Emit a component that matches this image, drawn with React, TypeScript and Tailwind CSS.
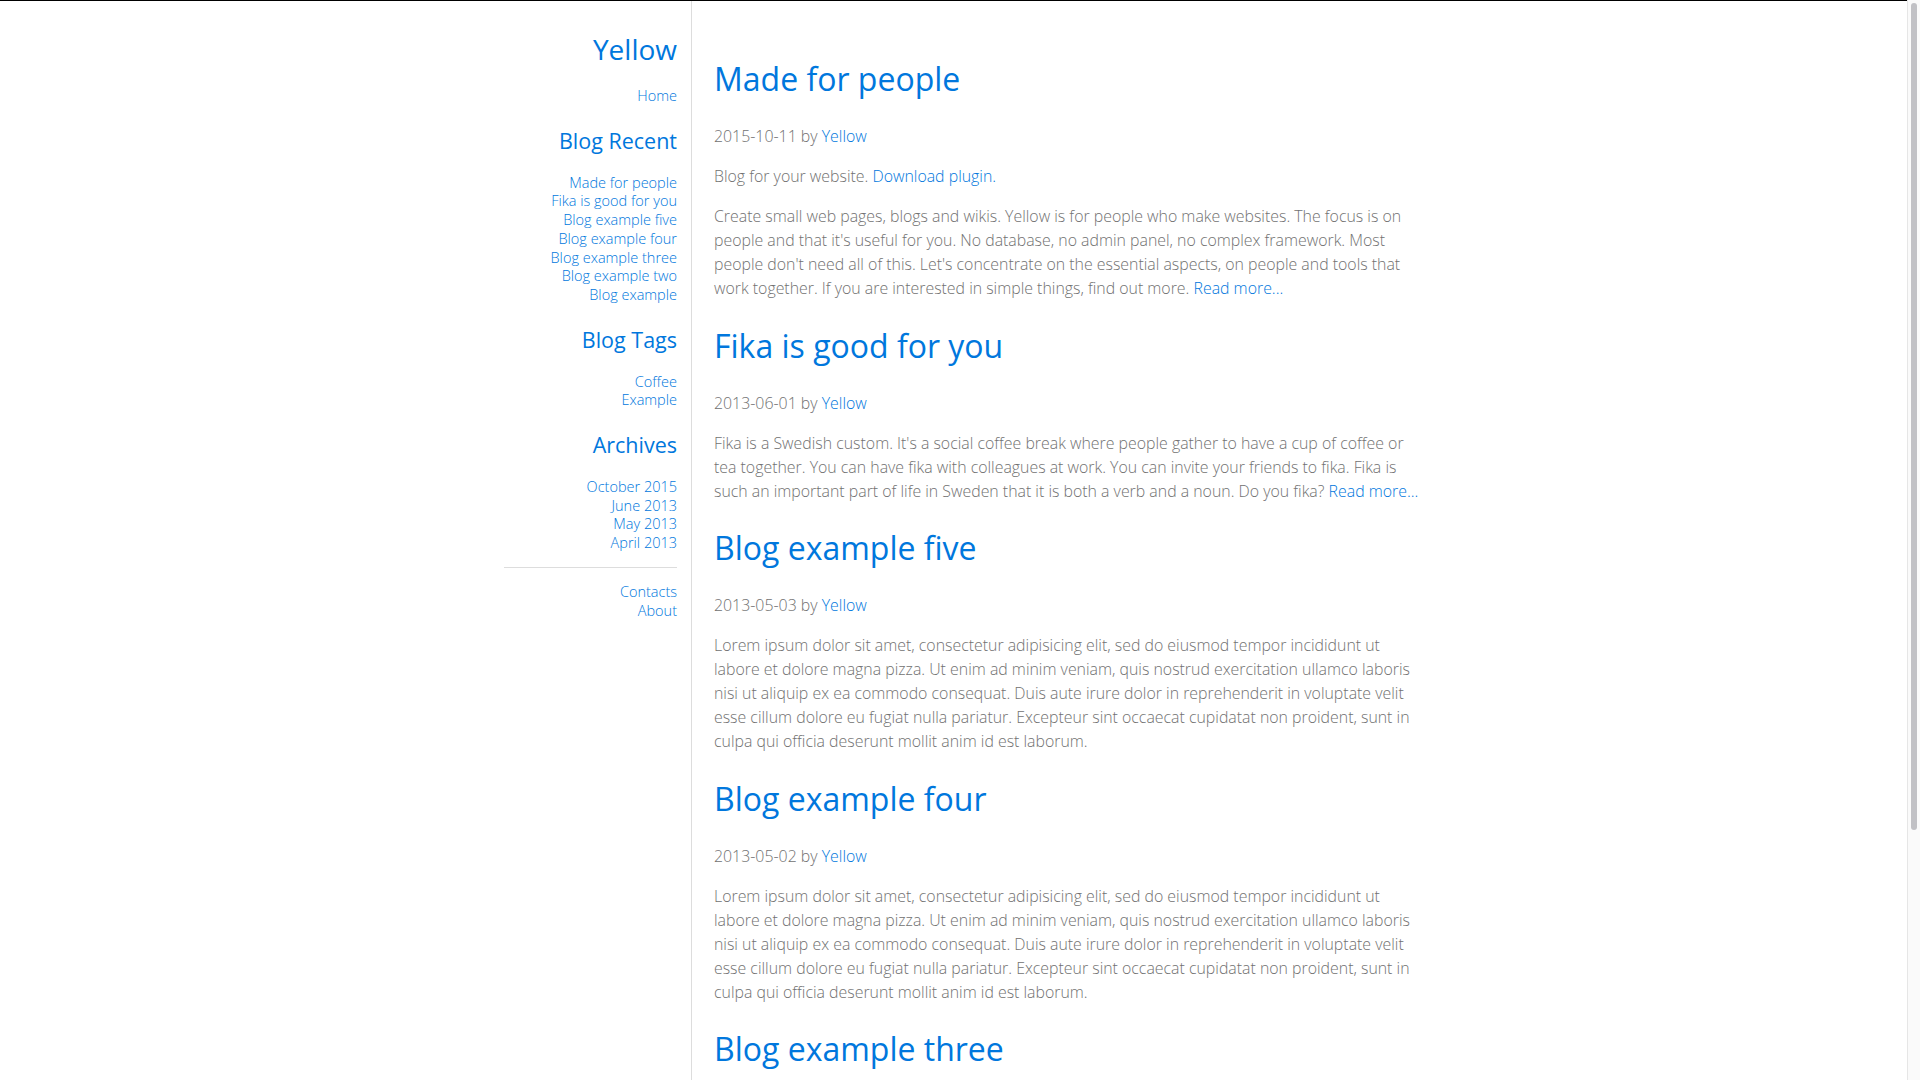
import React from "react";

const LOREM =
  "Lorem ipsum dolor sit amet, consectetur adipisicing elit, sed do eiusmod tempor incididunt ut labore et dolore magna pizza. Ut enim ad minim veniam, quis nostrud exercitation ullamco laboris nisi ut aliquip ex ea commodo consequat. Duis aute irure dolor in reprehenderit in voluptate velit esse cillum dolore eu fugiat nulla pariatur. Excepteur sint occaecat cupidatat non proident, sunt in culpa qui officia deserunt mollit anim id est laborum.";

function SideHeading({ children }: { children: React.ReactNode }) {
  return (
    <h2 className="mt-[22px] mb-[20px] text-[21.5px] leading-[26px] font-normal text-[#0077dd]">
      {children}
    </h2>
  );
}

function SideList({ items }: { items: string[] }) {
  return (
    <ul className="text-[14.5px] leading-[18.7px]">
      {items.map((t) => (
        <li key={t}>
          <a className="text-[#0077dd]" href="#">
            {t}
          </a>
        </li>
      ))}
    </ul>
  );
}

function Meta({ date }: { date: string }) {
  return (
    <p className="my-4">
      {date} by <a className="text-[#0077dd]" href="#">Yellow</a>
    </p>
  );
}

function Title({ children }: { children: React.ReactNode }) {
  return (
    <h1 className="mt-[26.4px] mb-[25.8px] text-[32px] leading-[38.4px] font-normal text-[#0077dd]">
      {children}
    </h1>
  );
}

export default function App() {
  return (
    <div
      className="flex h-screen w-full overflow-hidden bg-white text-[#717171] font-light"
      style={{ fontFamily: '"Open Sans", "Liberation Sans", sans-serif' }}
    >
      <div className="flex-1 min-w-0 border-t border-black">
        <div className="flex pl-[504px]">
          <aside className="w-[188px] shrink-0 border-r border-[#dddddd] pr-[14px] pt-[31px] text-right min-h-[1079px]">
            <div className="text-[28px] leading-[34px] font-normal text-[#0077dd]">Yellow</div>
            <div className="mt-[21px] text-[14.5px] leading-[18.7px]">
              <a className="text-[#0077dd]" href="#">Home</a>
            </div>
            <SideHeading>Blog Recent</SideHeading>
            <SideList
              items={[
                "Made for people",
                "Fika is good for you",
                "Blog example five",
                "Blog example four",
                "Blog example three",
                "Blog example two",
                "Blog example",
              ]}
            />
            <SideHeading>Blog Tags</SideHeading>
            <SideList items={["Coffee", "Example"]} />
            <SideHeading>Archives</SideHeading>
            <SideList items={["October 2015", "June 2013", "May 2013", "April 2013"]} />
            <hr className="mt-[14px] mb-[15px] border-0 border-t border-[#dddddd]" />
            <SideList items={["Contacts", "About"]} />
          </aside>
          <main className="w-[730px] shrink-0 pl-[22px] pt-[32.6px] text-[15.88px] leading-[24px]">
            <Title>Made for people</Title>
            <Meta date="2015-10-11" />
            <p className="my-4">
              Blog for your website. <a className="text-[#0077dd]" href="#">Download plugin.</a>
            </p>
            <p className="my-4">
              Create small web pages, blogs and wikis. Yellow is for people who make websites. The focus is on
              people and that it's useful for you. No database, no admin panel, no complex framework. Most people
              don't need all of this. Let's concentrate on the essential aspects, on people and tools that work
              together. If you are interested in simple things, find out more.{" "}
              <a className="text-[#0077dd]" href="#">Read more...</a>
            </p>
            <Title>Fika is good for you</Title>
            <Meta date="2013-06-01" />
            <p className="my-4">
              Fika is a Swedish custom. It's a social coffee break where people gather to have a cup of coffee or
              tea together. You can have fika with colleagues at work. You can invite your friends to fika. Fika is
              such an important part of life in Sweden that it is both a verb and a noun. Do you fika?{" "}
              <a className="text-[#0077dd]" href="#">Read more...</a>
            </p>
            <Title>Blog example five</Title>
            <Meta date="2013-05-03" />
            <p className="my-4">{LOREM}</p>
            <Title>Blog example four</Title>
            <Meta date="2013-05-02" />
            <p className="my-4">{LOREM}</p>
            <Title>Blog example three</Title>
            <Meta date="2013-05-01" />
            <p className="my-4">{LOREM}</p>
          </main>
        </div>
      </div>
      <div className="w-[13px] shrink-0 border-l border-[#e6e6e6] bg-[#fafafa] pl-[3px] pt-[3px]">
        <div className="h-[827px] w-[6px] rounded-full bg-[#c1c1c5]" />
      </div>
    </div>
  );
}
